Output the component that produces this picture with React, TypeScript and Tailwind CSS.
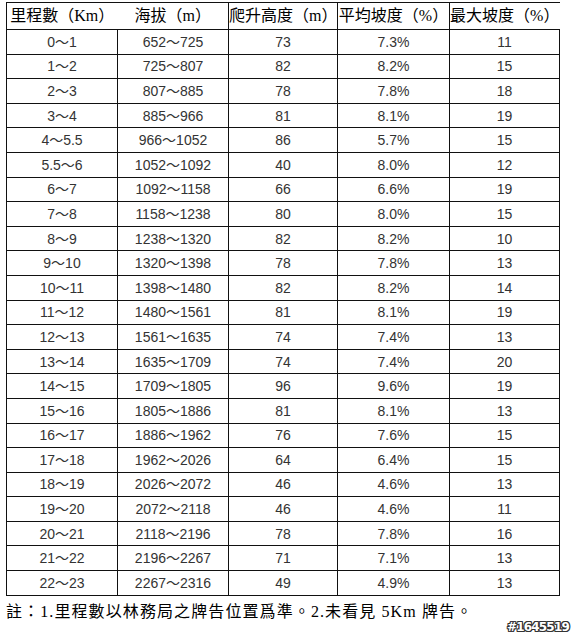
import React from "react";

const ROWS: [string, string, string, string, string][] = [
  ["0～1", "652～725", "73", "7.3%", "11"],
  ["1～2", "725～807", "82", "8.2%", "15"],
  ["2～3", "807～885", "78", "7.8%", "18"],
  ["3～4", "885～966", "81", "8.1%", "19"],
  ["4～5.5", "966～1052", "86", "5.7%", "15"],
  ["5.5～6", "1052～1092", "40", "8.0%", "12"],
  ["6～7", "1092～1158", "66", "6.6%", "19"],
  ["7～8", "1158～1238", "80", "8.0%", "15"],
  ["8～9", "1238～1320", "82", "8.2%", "10"],
  ["9～10", "1320～1398", "78", "7.8%", "13"],
  ["10～11", "1398～1480", "82", "8.2%", "14"],
  ["11～12", "1480～1561", "81", "8.1%", "19"],
  ["12～13", "1561～1635", "74", "7.4%", "13"],
  ["13～14", "1635～1709", "74", "7.4%", "20"],
  ["14～15", "1709～1805", "96", "9.6%", "19"],
  ["15～16", "1805～1886", "81", "8.1%", "13"],
  ["16～17", "1886～1962", "76", "7.6%", "15"],
  ["17～18", "1962～2026", "64", "6.4%", "15"],
  ["18～19", "2026～2072", "46", "4.6%", "13"],
  ["19～20", "2072～2118", "46", "4.6%", "11"],
  ["20～21", "2118～2196", "78", "7.8%", "16"],
  ["21～22", "2196～2267", "71", "7.1%", "13"],
  ["22～23", "2267～2316", "49", "4.9%", "13"],
];

const HEAD = "font-['Liberation_Serif','Noto_Sans_CJK_TC',serif] text-[16px] font-normal text-black whitespace-nowrap p-0 text-center";

export default function App() {
  return (
    <div className="relative w-[577px] h-[634px] bg-white overflow-hidden">
      <div className="pt-[2px] pl-[6px]">
        <table className="border-collapse table-fixed w-[553px]">
          <colgroup>
            <col className="w-[111px]" />
            <col className="w-[111px]" />
            <col className="w-[109px]" />
            <col className="w-[112px]" />
            <col className="w-[110px]" />
          </colgroup>
          <thead>
            <tr className="h-[27px]">
              <th className={`${HEAD} border-l border-t border-b border-[#111]`}>里程數（Km）</th>
              <th className={`${HEAD} border-t border-b border-r border-[#111]`}>海拔（m）</th>
              <th className={`${HEAD} border-t border-b border-r border-[#111]`}>爬升高度（m）</th>
              <th className={`${HEAD} border-t border-b border-r border-[#111]`}>平均坡度（%）</th>
              <th className={`${HEAD} border-t border-b border-[#111]`}>最大坡度（%）</th>
            </tr>
          </thead>
          <tbody>
            {ROWS.map((r, i) => (
              <tr key={i} className="h-[24.6px]">
                {r.map((c, j) => (
                  <td
                    key={j}
                    className="border border-[#111] p-0 text-center text-[14px] leading-none text-[#333] font-['Liberation_Sans','Noto_Sans_CJK_TC',sans-serif] whitespace-nowrap"
                  >
                    {c}
                  </td>
                ))}
              </tr>
            ))}
          </tbody>
        </table>
      </div>
      <div className="pl-[6px] mt-[3px] text-[16px] leading-[26px] tracking-[1.1px] text-black font-['Liberation_Serif','Noto_Sans_CJK_TC',serif] whitespace-nowrap">
        註：1.里程數以林務局之牌告位置爲準。2.未看見 5Km 牌告。
      </div>
      <div className="absolute right-[8px] top-[621px] text-[12px] leading-none font-bold text-white font-['DejaVu_Sans',sans-serif] tracking-[-0.8px] [text-shadow:1px_0_0_#333,-1px_0_0_#333,0_1px_0_#333,0_-1px_0_#333,1px_1px_0_#333,-1px_-1px_0_#333,1px_-1px_0_#333,-1px_1px_0_#333]">
        #1645519
      </div>
    </div>
  );
}
